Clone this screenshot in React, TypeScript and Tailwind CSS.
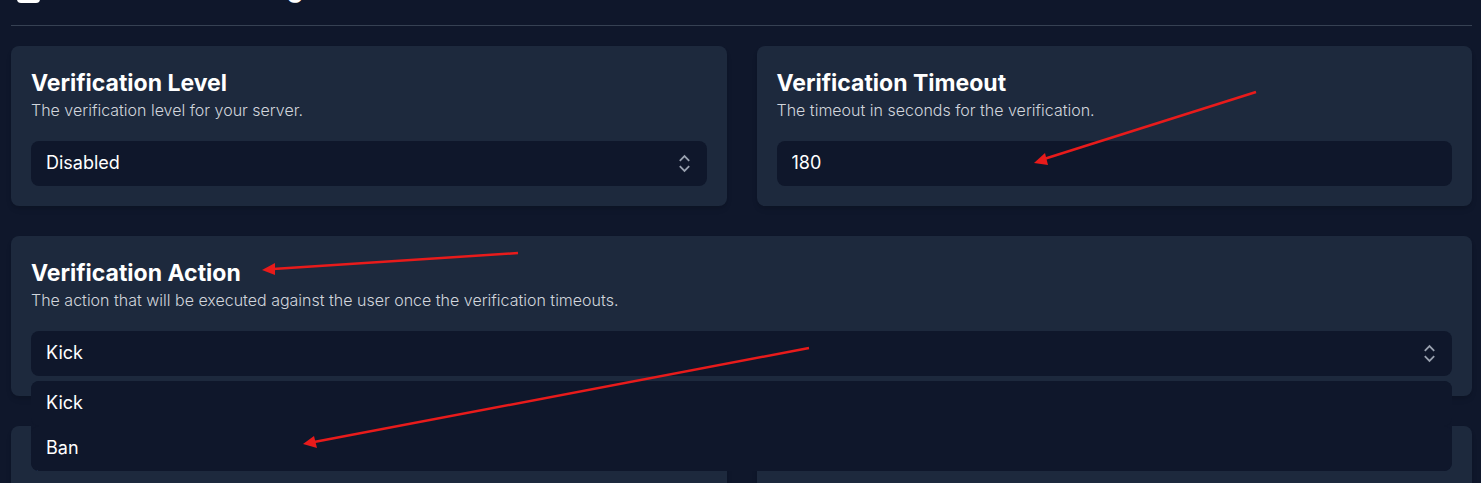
import React, { useState } from 'react';

type CardProps = {
  id: string;
  title: string;
  description?: string;
  wide?: boolean;
  children: React.ReactNode;
};

const FIELD = 'block w-full h-[45px] rounded-lg bg-slate-900 px-[15px] pb-[2px] text-lg text-white outline-none';

const ARROWS = [
  { line: 'M1256 92 L1044 159', head: '1034,163 1045,153 1048,165' },
  { line: 'M518 253 L273 269', head: '262,270 275,263 275,275' },
  { line: 'M809 348 L314 442', head: '303,444 314,436 317,448' },
];

const Card: React.FC<CardProps> = ({ id, title, description, wide, children }) => (
  <section className={`rounded-lg bg-slate-800 p-5 shadow-md ${wide ? 'col-span-2' : ''}`}>
    <label htmlFor={id} className="block text-[23px] leading-[34px] font-bold text-white whitespace-nowrap">{title}</label>
    {description && <p className="text-base leading-5 font-light text-gray-300">{description}</p>}
    <div className="relative mt-[21px]">{children}</div>
  </section>
);

const UpDownIcon = () => (
  <svg className="pointer-events-none absolute right-[10px] top-[10px] size-[25px] text-gray-400" viewBox="0 0 25 25" fill="none" stroke="currentColor" strokeWidth="1.8" aria-hidden="true">
    <path d="M7.8 9.8 12.5 5.1l4.7 4.7M7.8 15.2l4.7 4.7 4.7-4.7" />
  </svg>
);

const App: React.FC = () => {
  const [level, setLevel] = useState('Disabled');
  const [timeout, setTimeoutValue] = useState('180');
  const [action, setAction] = useState('Kick');

  return (
    <div className="relative h-screen overflow-hidden bg-slate-900 pl-[11px] pr-[9px] font-['Inter',sans-serif]">
      <header className="-mt-10 flex h-[66px] items-start gap-[18px] border-b border-gray-700 pl-[5px] text-white">
        <svg className="mt-[18px] size-[25px]" viewBox="0 0 25 25" fill="currentColor" aria-hidden="true">
          <rect x="1" y="1" width="23" height="24" rx="4" />
        </svg>
        <h1 className="mt-2 text-[26px] leading-10 font-bold">Verification Settings</h1>
      </header>

      <main className="mt-5 grid grid-cols-2 gap-[30px]">
        <Card id="level" title="Verification Level" description="The verification level for your server.">
          <select id="level" value={level} onChange={(e) => setLevel(e.target.value)} className={`${FIELD} appearance-none`}>
            <option>Disabled</option>
            <option>Enabled</option>
          </select>
          <UpDownIcon />
        </Card>

        <Card id="timeout" title="Verification Timeout" description="The timeout in seconds for the verification.">
          <input id="timeout" type="text" inputMode="numeric" value={timeout} onChange={(e) => setTimeoutValue(e.target.value)} className={FIELD} />
        </Card>

        <Card id="action" wide title="Verification Action" description="The action that will be executed against the user once the verification timeouts.">
          <select id="action" value={action} onChange={(e) => setAction(e.target.value)} className={`${FIELD} appearance-none`}>
            <option>Kick</option>
            <option>Ban</option>
          </select>
          <UpDownIcon />
          <div className="absolute inset-x-0 top-[50px] z-10 overflow-hidden rounded-lg bg-slate-900">
            {['Kick', 'Ban'].map(name => (
              <button key={name} type="button" onClick={() => setAction(name)} className={`${FIELD} text-left`}>{name}</button>
            ))}
          </div>
        </Card>

        <Card id="role" title="Verification Role">
          <input id="role" type="text" className={FIELD} />
        </Card>

        <Card id="channel" title="Verification Channel">
          <input id="channel" type="text" className={FIELD} />
        </Card>
      </main>

      <svg className="pointer-events-none absolute left-0 top-0 z-20 h-[483px] w-[1481px]" viewBox="0 0 1481 483" aria-hidden="true">
        {ARROWS.map(a => (
          <g key={a.head} className="fill-[#e81b1b] stroke-[#e81b1b]">
            <path d={a.line} strokeWidth="2.5" />
            <polygon points={a.head} stroke="none" />
          </g>
        ))}
      </svg>
    </div>
  );
};

export default App;
